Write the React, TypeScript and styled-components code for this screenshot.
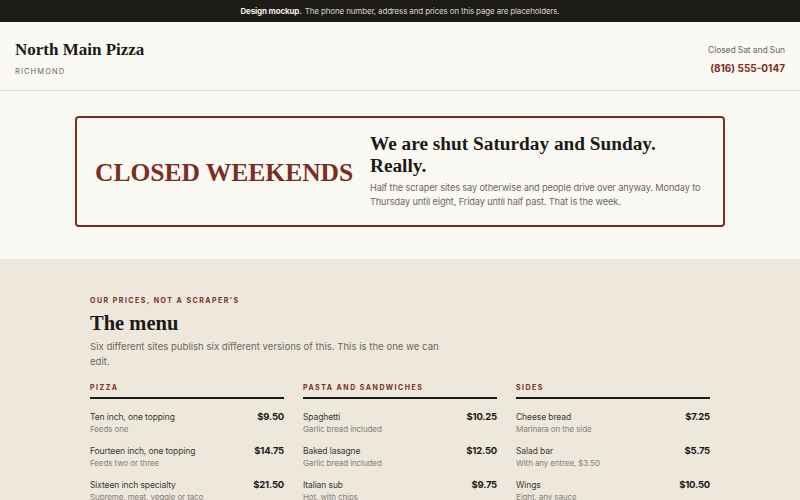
import React from "react";
import styled, { createGlobalStyle } from "styled-components";

const RED = "#7b2e23";
const INK = "#1b1915";
const MUTED = "#6d675e";
const SERIF = `"Liberation Serif", "DejaVu Serif", serif`;
const SANS = `Inter, "Noto Sans", sans-serif`;

const Global = createGlobalStyle`
  html, body { margin: 0; padding: 0; }
  body { background: #ede7dc; font-family: ${SANS}; color: ${INK}; }
  * { box-sizing: border-box; }
`;

const Banner = styled.div`
  height: 22px;
  background: #1d1b18;
  color: #d9d4ca;
  font-size: 8px;
  letter-spacing: -0.15px;
  display: flex;
  align-items: center;
  justify-content: center;
  b { color: #f3efe7; font-weight: 700; margin-right: 3px; }
`;

const Header = styled.header`
  height: 69px;
  background: #fbf9f3;
  border-bottom: 1px solid #dedad2;
  display: flex;
  align-items: flex-start;
  justify-content: space-between;
  padding: 18px 15px 0;
`;

const Brand = styled.div`
  display: flex;
  flex-direction: column;
  gap: 7px;
`;

const Title = styled.div`
  font-family: ${SERIF};
  font-weight: 700;
  font-size: 17px;
  line-height: 20px;
  color: ${INK};
`;

const Locale = styled.div`
  font-size: 7.5px;
  line-height: 10px;
  letter-spacing: 1.1px;
  color: ${MUTED};
`;

const Contact = styled.div`
  display: flex;
  flex-direction: column;
  align-items: flex-end;
  gap: 5px;
  margin-top: 4px;
`;

const Hours = styled.div`
  font-size: 8.5px;
  line-height: 12px;
  letter-spacing: -0.1px;
  color: ${MUTED};
`;

const Phone = styled.div`
  font-size: 10px;
  line-height: 14px;
  font-weight: 700;
  color: ${RED};
`;

const NoticeSection = styled.section`
  background: #fbf9f3;
  padding: 25px 75px 32px;
`;

const NoticeBox = styled.div`
  border: 2px solid ${RED};
  border-radius: 4px;
  height: 111px;
  display: grid;
  grid-template-columns: 275px 1fr;
  align-items: center;
  padding: 0 16px 0 18px;
`;

const Shout = styled.div`
  font-family: ${SERIF};
  font-weight: 700;
  font-size: 25.5px;
  color: ${RED};
  white-space: nowrap;
  margin-top: 2px;
`;

const NoticeText = styled.div`
  display: flex;
  flex-direction: column;
  gap: 4px;
  margin-top: -2px;
`;

const NoticeHead = styled.div`
  font-family: ${SERIF};
  font-weight: 700;
  font-size: 19.3px;
  line-height: 22px;
  color: ${INK};
`;

const NoticeBody = styled.p`
  margin: 0;
  font-size: 9.2px;
  line-height: 14px;
  letter-spacing: -0.12px;
  color: ${MUTED};
`;

const MenuSection = styled.section`
  background: #ede7dc;
  padding: 37px 90px 40px;
`;

const Eyebrow = styled.div`
  font-size: 7px;
  line-height: 10px;
  font-weight: 700;
  letter-spacing: 1.5px;
  color: ${RED};
`;

const MenuTitle = styled.h2`
  margin: 4px 0 0;
  font-family: ${SERIF};
  font-weight: 700;
  font-size: 20.5px;
  line-height: 26px;
  color: ${INK};
`;

const Lede = styled.p`
  margin: 3px 0 0;
  max-width: 350px;
  font-size: 9.6px;
  line-height: 15px;
  color: ${MUTED};
`;

const Columns = styled.div`
  margin-top: 14px;
  display: grid;
  grid-template-columns: repeat(3, 194px);
  column-gap: 19px;
`;

const Column = styled.div`
  display: flex;
  flex-direction: column;
`;

const ColHead = styled.div`
  font-size: 7px;
  line-height: 10px;
  font-weight: 700;
  letter-spacing: 1.5px;
  color: ${RED};
  padding-bottom: 4px;
  border-bottom: 2px solid ${INK};
`;

const Items = styled.div`
  display: flex;
  flex-direction: column;
  gap: 10px;
  padding-top: 12px;
`;

const Item = styled.div`
  display: flex;
  justify-content: space-between;
  align-items: flex-start;
`;

const ItemName = styled.div`
  font-size: 8.5px;
  line-height: 12px;
  letter-spacing: -0.1px;
  color: #3b3731;
`;

const ItemNote = styled.div`
  font-size: 8px;
  line-height: 12px;
  letter-spacing: -0.1px;
  color: #86807a;
`;

const Price = styled.div`
  font-size: 9.5px;
  font-weight: 700;
  line-height: 12px;
  letter-spacing: -0.2px;
  color: ${INK};
`;

type Dish = { name: string; note: string; price: string };

const menu: { title: string; dishes: Dish[] }[] = [
  {
    title: "Pizza",
    dishes: [
      { name: "Ten inch, one topping", note: "Feeds one", price: "$9.50" },
      { name: "Fourteen inch, one topping", note: "Feeds two or three", price: "$14.75" },
      { name: "Sixteen inch specialty", note: "Supreme, meat, veggie or taco", price: "$21.50" },
    ],
  },
  {
    title: "Pasta and sandwiches",
    dishes: [
      { name: "Spaghetti", note: "Garlic bread included", price: "$10.25" },
      { name: "Baked lasagne", note: "Garlic bread included", price: "$12.50" },
      { name: "Italian sub", note: "Hot, with chips", price: "$9.75" },
    ],
  },
  {
    title: "Sides",
    dishes: [
      { name: "Cheese bread", note: "Marinara on the side", price: "$7.25" },
      { name: "Salad bar", note: "With any entree, $3.50", price: "$5.75" },
      { name: "Wings", note: "Eight, any sauce", price: "$10.50" },
    ],
  },
];

export default function App() {
  return (
    <>
      <Global />
      <Banner>
        <b>Design mockup.</b> The phone number, address and prices on this page are placeholders.
      </Banner>
      <Header>
        <Brand>
          <Title>North Main Pizza</Title>
          <Locale>RICHMOND</Locale>
        </Brand>
        <Contact>
          <Hours>Closed Sat and Sun</Hours>
          <Phone>(816) 555-0147</Phone>
        </Contact>
      </Header>
      <NoticeSection>
        <NoticeBox>
          <Shout>CLOSED WEEKENDS</Shout>
          <NoticeText>
            <NoticeHead>
              We are shut Saturday and Sunday.
              <br />
              Really.
            </NoticeHead>
            <NoticeBody>
              Half the scraper sites say otherwise and people drive over anyway. Monday to Thursday until
              eight, Friday until half past. That is the week.
            </NoticeBody>
          </NoticeText>
        </NoticeBox>
      </NoticeSection>
      <MenuSection>
        <Eyebrow>OUR PRICES, NOT A SCRAPER’S</Eyebrow>
        <MenuTitle>The menu</MenuTitle>
        <Lede>Six different sites publish six different versions of this. This is the one we can edit.</Lede>
        <Columns>
          {menu.map((col) => (
            <Column key={col.title}>
              <ColHead>{col.title.toUpperCase()}</ColHead>
              <Items>
                {col.dishes.map((d) => (
                  <Item key={d.name}>
                    <div>
                      <ItemName>{d.name}</ItemName>
                      <ItemNote>{d.note}</ItemNote>
                    </div>
                    <Price>{d.price}</Price>
                  </Item>
                ))}
              </Items>
            </Column>
          ))}
        </Columns>
      </MenuSection>
    </>
  );
}
